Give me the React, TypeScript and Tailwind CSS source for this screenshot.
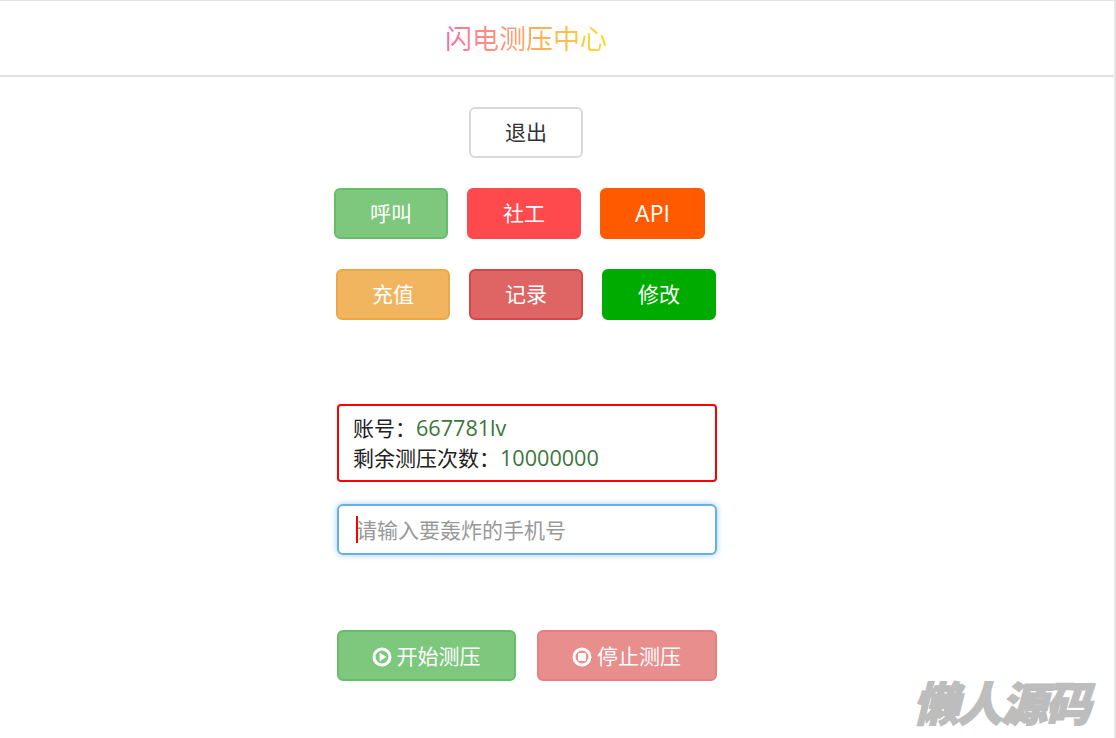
import React from 'react';

const font = "font-['Open_Sans','Noto_Sans_CJK_SC',sans-serif]";

const btn =
  'flex h-[51px] items-center justify-center rounded-[6px] border-2 text-[21px] leading-none';

function PlayIcon() {
  return (
    <svg width="20" height="20" viewBox="0 0 20 20" className="mr-[5px] shrink-0">
      <circle cx="10" cy="10" r="8" fill="none" stroke="white" strokeWidth="3" />
      <path d="M7.6 5.7 L14.6 10 L7.6 14.3 Z" fill="white" />
    </svg>
  );
}

function StopIcon() {
  return (
    <svg width="20" height="20" viewBox="0 0 20 20" className="mr-[5px] shrink-0">
      <circle cx="10" cy="10" r="8" fill="none" stroke="white" strokeWidth="3" />
      <rect x="6" y="6" width="8" height="8" rx="1" fill="white" />
    </svg>
  );
}

export default function App() {
  return (
    <div className={`relative h-[738px] w-[1116px] overflow-hidden bg-white ${font}`}>
      <div className="h-full w-[1116px] border-r-2 border-[#e8e8e8]">
        <header className="flex h-[77px] items-center justify-center border-t border-b-2 border-t-[#e5e5e5] border-b-[#e1e1e1] pr-[62px]">
          <h1 className="bg-linear-to-r from-[#ff6aa6] via-[#ffa55c] to-[#ffd92a] bg-clip-text text-[27px] leading-none font-normal text-transparent">
            闪电测压中心
          </h1>
        </header>

        <main className="flex w-[1052px] flex-col items-center pt-[30px]">
          <button className={`${btn} w-[114px] border-[#d9d9d9] bg-white text-[#333]`}>
            退出
          </button>

          <div className="mt-[30px] mr-[13px] flex gap-[19px]">
            <button className={`${btn} w-[114px] border-[#68bd6a] bg-[#7dc87d] text-white`}>呼叫</button>
            <button className={`${btn} w-[114px] border-[#ff4a4d] bg-[#ff4a4d] text-white`}>社工</button>
            <button className={`${btn} w-[105px] border-[#ff5a00] bg-[#ff5a00] text-[23px] text-white`}>API</button>
          </div>

          <div className="mt-[30px] flex gap-[19px]">
            <button className={`${btn} w-[114px] border-[#eea747] bg-[#f1b55f] text-white`}>充值</button>
            <button className={`${btn} w-[114px] border-[#d4474a] bg-[#de6563] text-white`}>记录</button>
            <button className={`${btn} w-[114px] border-[#00ab00] bg-[#00ab00] text-white`}>修改</button>
          </div>

          <div className="mt-[84px] ml-[2px] h-[78px] w-[380px] rounded-[4px] border-2 border-[#ff0000] px-[14px] py-[7px] text-[21px] leading-[30px] text-[#222]">
            <div>
              账号：<span className="text-[21.6px] text-[#3c763d]">667781lv</span>
            </div>
            <div>
              剩余测压次数：<span className="text-[21.6px] text-[#3c763d]">10000000</span>
            </div>
          </div>

          <div className="relative mt-[22px] ml-[2px] w-[380px]">
            <input
              readOnly
              placeholder="请输入要轰炸的手机号"
              className="h-[51px] w-full rounded-[6px] border-2 border-[#66afe9] bg-white pr-[14px] pl-[17px] text-[21px] shadow-[0_0_6px_rgba(102,175,233,0.6)] outline-none placeholder:text-[#999]"
            />
            <span className="absolute top-[12px] left-[19px] h-[27px] w-[2px] bg-[#ff0000]" />
          </div>

          <div className="mt-[75px] ml-[2px] flex w-[380px] justify-between">
            <button className={`${btn} w-[179px] border-[#68bd6a] bg-[#7dc87d] pt-[2px] pr-[1px] text-white`}>
              <PlayIcon />
              开始测压
            </button>
            <button className={`${btn} w-[180px] border-[#e68080] bg-[#e88e8c] pt-[2px] pr-[1px] text-white`}>
              <StopIcon />
              停止测压
            </button>
          </div>
        </main>
      </div>

      <div className="absolute top-[674px] left-[913px] text-[46px] leading-[58px] font-black tracking-[-2px] text-[#bdbdbd] italic [-webkit-text-stroke:1.5px_#bdbdbd]">
        懒人源码
      </div>
    </div>
  );
}
